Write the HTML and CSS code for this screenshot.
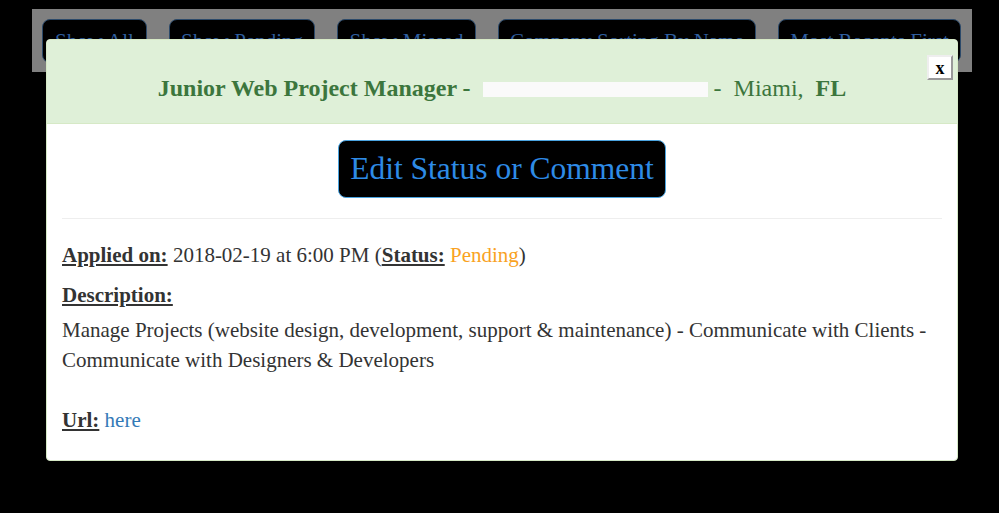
FILE: index.html
```html
<!DOCTYPE html>
<html>
<head>
<meta charset="utf-8">
<link rel="stylesheet" href="styles.css">
</head>
<body>
<div class="toolbar">
  <button class="tbtn w-all">Show All</button>
  <button class="tbtn w-pending">Show Pending</button>
  <button class="tbtn w-missed">Show Missed</button>
  <button class="tbtn w-company">Company Sorting By Name</button>
  <button class="tbtn w-recent">Most Recents First</button>
</div>

<div class="modal">
  <div class="modal-header">
    <h4 class="title"><b>Junior Web Project Manager -</b>&nbsp; <span class="redacted"></span> -&nbsp; Miami,&nbsp; <b>FL</b></h4>
    <button class="close">x</button>
  </div>
  <div class="modal-body">
    <div class="edit-row"><button class="edit-btn">Edit Status or Comment</button></div>
    <hr class="sep">
    <p class="line applied"><b class="lbl">Applied on:</b> 2018-02-19 at 6:00 PM (<b class="lbl">Status:</b> <span class="pending">Pending</span>)</p>
    <p class="line desc-h"><b class="lbl">Description:</b></p>
    <p class="line desc">Manage Projects (website design, development, support &amp; maintenance) - Communicate with Clients - Communicate with Designers &amp; Developers<br><br><b class="lbl">Url:</b> <a class="link" href="#">here</a></p>
  </div>
</div>
</body>
</html>
```

FILE: styles.css
```css
html, body {
  margin: 0;
  padding: 0;
  background: #000;
  height: 100%;
  font-family: "Liberation Serif", "Times New Roman", serif;
}

.toolbar {
  margin: 9px 0 0 32px;
  width: 940px;
  height: 63px;
  box-sizing: border-box;
  background: #808080;
  padding: 10px 0 0 10px;
  display: flex;
  gap: 22px;
  align-items: flex-start;
}

.tbtn {
  background: #000;
  color: #2f5e9e;
  border: 1px solid #2c4a6a;
  border-radius: 8px;
  font-family: "Liberation Serif", "Times New Roman", serif;
  font-size: 21px;
  height: 44px;
  padding: 0;
  line-height: 42px;
  margin: 0;
  text-align: center;
  white-space: nowrap;
  flex: none;
}

.w-all { width: 105px; }
.w-pending { width: 146px; }
.w-missed { width: 139px; }
.w-company { width: 258px; }
.w-recent { width: 183px; }

.modal {
  position: absolute;
  left: 46px;
  top: 39px;
  width: 912px;
  box-sizing: border-box;
  background: #fff;
  border: 1px solid #d6e9c6;
  border-radius: 4px;
  overflow: hidden;
}

.modal-header {
  position: relative;
  background: #dff0d8;
  border-bottom: 1px solid #d6e9c6;
  padding: 33px 15px 20px;
  text-align: center;
}

.title {
  margin: 0;
  font-size: 24px;
  line-height: 30px;
  font-weight: normal;
  color: #3c763d;
}

.redacted {
  display: inline-block;
  width: 225px;
  height: 15px;
  background: #fafafa;
  vertical-align: -1px;
}

.close {
  position: absolute;
  top: 15px;
  right: 4px;
  width: 26px;
  height: 25px;
  padding: 0;
  background: #fff;
  border: 2px solid;
  border-color: #eee #999 #999 #eee;
  font-family: "Liberation Serif", serif;
  font-weight: bold;
  font-size: 18px;
  line-height: 18px;
  color: #000;
}

.modal-body {
  padding: 16px 15px 25px;
}

.edit-row {
  display: flex;
  justify-content: center;
}

.edit-btn {
  background: #000;
  color: #2e8be6;
  border: 1px solid #4aa3df;
  border-radius: 8px;
  font-family: "Liberation Serif", "Times New Roman", serif;
  font-size: 31.5px;
  height: 58px;
  width: 328px;
  padding: 0;
  margin: 0;
}

.sep {
  border: 0;
  border-top: 1px solid #eee;
  margin: 20px 0 21px;
}

.line {
  margin: 0;
  font-size: 21px;
  line-height: 30px;
  color: #333;
}

.applied { margin-bottom: 10px; }
.desc-h { margin-bottom: 5px; }

.lbl {
  text-decoration: underline;
}

.pending { color: #f9a21f; }

.link {
  color: #337ab7;
  text-decoration: none;
}
```
